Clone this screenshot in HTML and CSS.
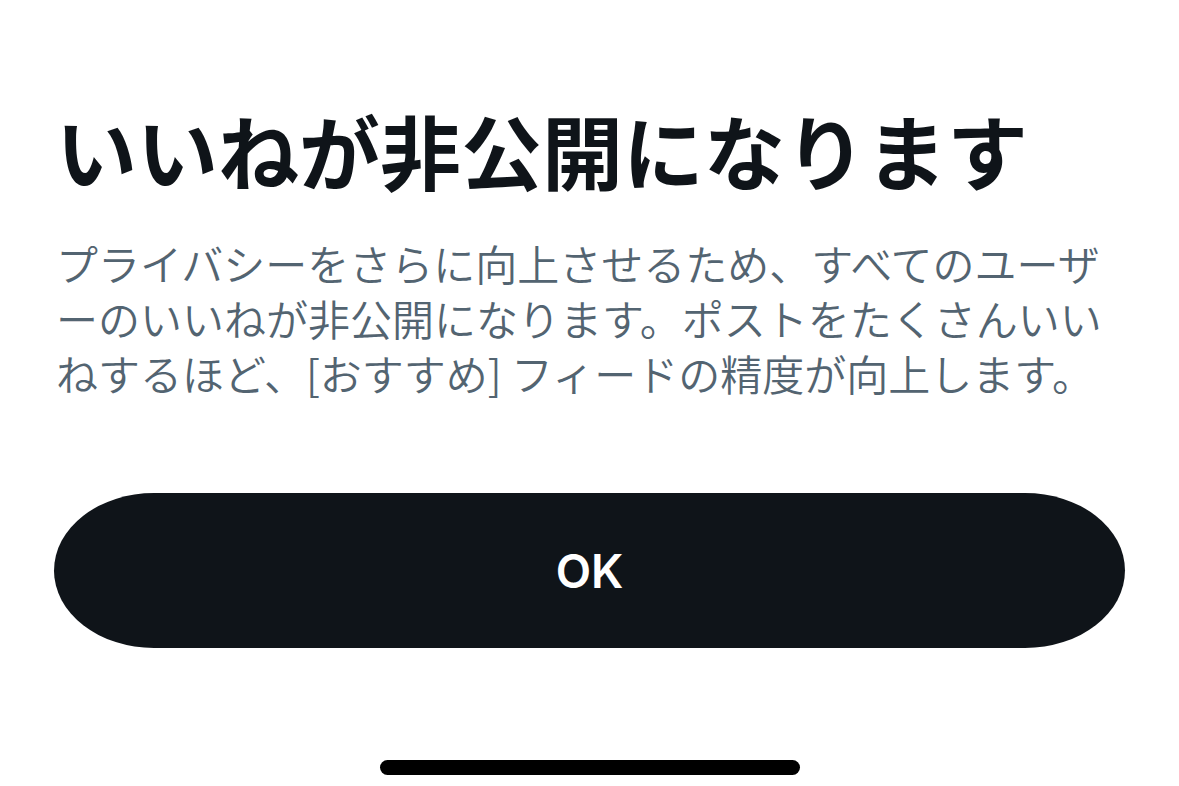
FILE: index.html
```html
<!DOCTYPE html>
<html lang="ja">
<head>
<meta charset="utf-8">
<title>いいねが非公開になります</title>
<link rel="stylesheet" href="styles.css">
</head>
<body>
<main class="sheet">
  <h1 class="title">いいねが非公開になります</h1>
  <p class="desc">プライバシーをさらに向上させるため、すべてのユーザーのいいねが非公開になります。ポストをたくさんいいねするほど、[おすすめ] フィードの精度が向上します。</p>
  <button class="ok" type="button">OK</button>
  <div class="home"><span class="home-bar"></span></div>
</main>
</body>
</html>
```

FILE: styles.css
```css
html, body {
  margin: 0;
  padding: 0;
  background: #ffffff;
}
body {
  width: 1179px;
  height: 786px;
  overflow: hidden;
}
.sheet {
  display: flex;
  flex-direction: column;
  padding: 100px 54px 0 54px;
  box-sizing: border-box;
  height: 786px;
}
.title {
  margin: 0;
  font-family: "Noto Sans CJK JP", sans-serif;
  font-weight: 700;
  font-size: 81px;
  line-height: 98px;
  color: #0f1419;
  padding-left: 2px;
  white-space: nowrap;
}
.desc {
  margin: 37px 0 0 0;
  font-family: "Noto Sans CJK JP", sans-serif;
  font-weight: 350;
  font-size: 42px;
  line-height: 55px;
  color: #536471;
  padding-left: 2px;
}
.ok {
  margin-top: 93px;
  height: 155px;
  width: 100%;
  border: none;
  background: #0f1419;
  color: #ffffff;
  border-radius: 100px / 77.5px;
  font-family: Inter, "Liberation Sans", sans-serif;
  font-weight: 600;
  font-size: 46px;
  padding: 0;
}
.home {
  display: flex;
  justify-content: center;
  margin-top: 112px;
}
.home-bar {
  display: block;
  width: 420px;
  height: 15px;
  border-radius: 8px;
  background: #000000;
}
```
